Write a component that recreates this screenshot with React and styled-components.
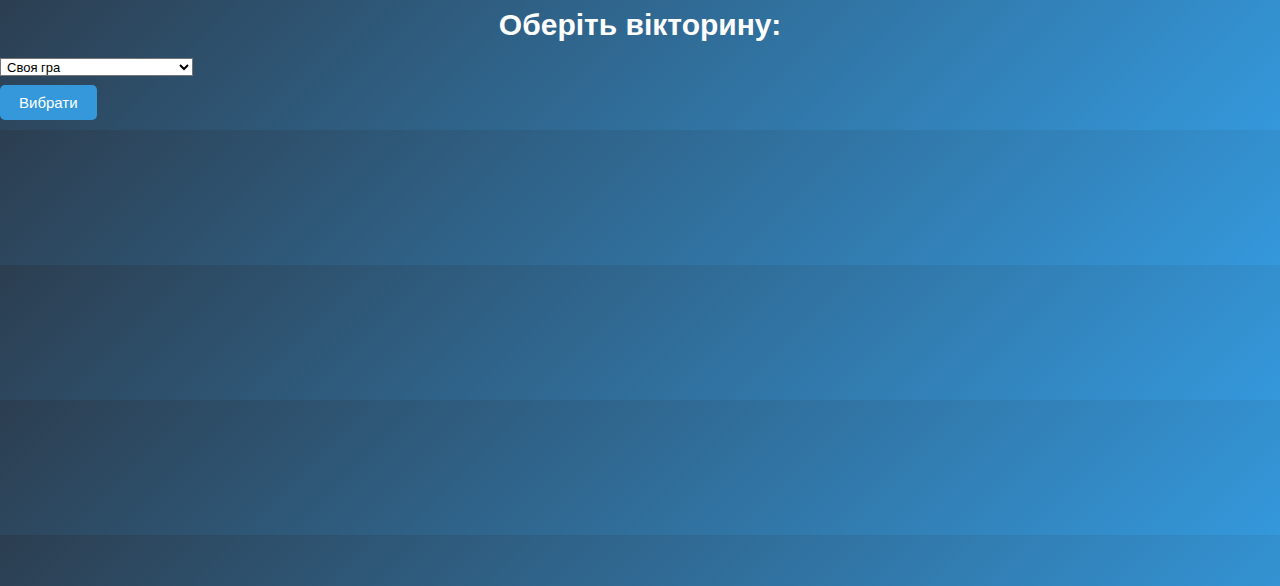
import React, { useState } from 'react';
import styled, { createGlobalStyle } from 'styled-components';

const GlobalStyle = createGlobalStyle`
  html {
    background: linear-gradient(135deg, #2c3e50, #3498db);
    background-size: 100% 135px;
    background-position: 0 -5px;
    background-repeat: repeat;
    min-height: 100%;
  }

  body {
    margin: 0;
    font-family: 'Liberation Sans', Arial, sans-serif;
    color: #ffffff;
  }
`;

const Page = styled.div`
  padding-top: 8px;
`;

const Title = styled.h1`
  margin: 0 0 16px;
  font-size: 30px;
  font-weight: bold;
  text-align: center;
  color: #ffffff;
`;

const QuizSelect = styled.select`
  display: block;
  width: 193px;
  height: 18px;
  margin: 0 0 9px;
  padding-left: 2px;
  font-family: 'Liberation Sans', Arial, sans-serif;
  font-size: 13px;
  color: #000000;
  background: #ffffff;
  border: 1px solid #767676;
  border-radius: 0;
`;

const ChooseButton = styled.button`
  display: block;
  padding: 9px 19px;
  font-family: 'Liberation Sans', Arial, sans-serif;
  font-size: 15px;
  color: #ffffff;
  background: #3498db;
  border: none;
  border-radius: 5px;
  cursor: pointer;
`;

const quizzes = ['Своя гра', 'Історія', 'Географія', 'Наука'];

const App = () => {
  const [quiz, setQuiz] = useState(quizzes[0]);
  return (
    <>
      <GlobalStyle />
      <Page>
        <Title>Оберіть вікторину:</Title>
        <QuizSelect value={quiz} onChange={(e) => setQuiz(e.target.value)}>
          {quizzes.map((q) => (
            <option key={q} value={q}>
              {q}
            </option>
          ))}
        </QuizSelect>
        <ChooseButton>Вибрати</ChooseButton>
      </Page>
    </>
  );
};

export default App;
